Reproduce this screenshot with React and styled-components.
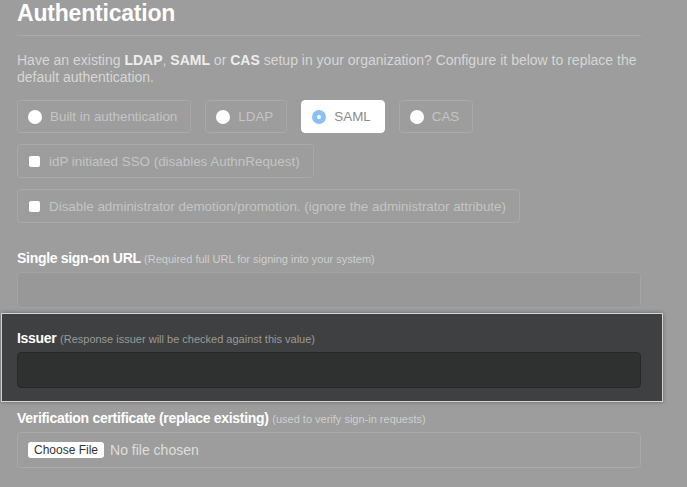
import React from "react";
import styled, { createGlobalStyle } from "styled-components";

const GlobalStyle = createGlobalStyle`
  body {
    margin: 0;
    background: #9c9d9c;
    font-family: "Liberation Sans", Arial, Helvetica, sans-serif;
  }
`;

const Page = styled.div`
  width: 624px;
  padding-left: 17px;
  padding-bottom: 20px;
`;

const Title = styled.h1`
  margin: 0;
  padding-bottom: 9px;
  font-size: 23px;
  line-height: 26px;
  font-weight: bold;
  color: #ffffff;
  letter-spacing: -0.2px;
  border-bottom: 1px solid #a9aaa9;
`;

const Intro = styled.p`
  margin: 16px 0 0;
  font-size: 14px;
  line-height: 17px;
  color: #d6d7d6;

  strong {
    color: #eeeeee;
  }
`;

const OptionRow = styled.div`
  display: flex;
  gap: 14px;
  margin-top: ${(p) => p.$top}px;
`;

const Option = styled.label`
  display: flex;
  align-items: center;
  height: ${(p) => p.$h}px;
  box-sizing: border-box;
  padding: 0 13px 0 ${(p) => p.$pl}px;
  gap: ${(p) => p.$gap}px;
  border: 1px solid ${(p) => (p.$active ? "#ffffff" : "#a8a9a8")};
  border-radius: 4px;
  background: ${(p) => (p.$active ? "#ffffff" : "transparent")};
  color: ${(p) => (p.$active ? "#8c8c8c" : "#c4c5c4")};
  font-size: 13.4px;
`;

const Radio = styled.span`
  width: 14px;
  height: 14px;
  border-radius: 50%;
  background: ${(p) => (p.$on ? "#8bbff6" : "#ffffff")};
  display: flex;
  align-items: center;
  justify-content: center;

  &::after {
    content: "";
    display: ${(p) => (p.$on ? "block" : "none")};
    width: 4px;
    height: 4px;
    border-radius: 50%;
    background: #ffffff;
  }
`;

const Check = styled.span`
  width: 11px;
  height: 11px;
  border-radius: 2px;
  background: #ffffff;
`;

const Label = styled.div`
  height: 17px;
  margin-top: ${(p) => p.$top}px;
  margin-bottom: 5px;
  font-size: 14px;
  line-height: 17px;
  font-weight: bold;
  color: #ffffff;
  letter-spacing: -0.3px;
  white-space: nowrap;
`;

const Hint = styled.span`
  font-size: 11px;
  line-height: 1;
  font-weight: normal;
  letter-spacing: 0;
  color: ${(p) => (p.$dark ? "#9a9a9a" : "#cfd0cf")};
`;

const Input = styled.div`
  height: 36px;
  box-sizing: border-box;
  border-radius: 4px;
  border: 1px solid ${(p) => (p.$dark ? "#272828" : "#a2a3a2")};
  background: ${(p) => (p.$dark ? "#2f3030" : "#979897")};
`;

const Spotlight = styled.section`
  margin: 5px -22px 0 -16px;
  padding: 16px 21px 13px 15px;
  background: #3f4041;
  border: 1px solid #d4d4d4;
  box-shadow: 0 0 4px rgba(0, 0, 0, 0.35);
`;

const FileBox = styled.div`
  height: 36px;
  box-sizing: border-box;
  border: 1px solid #a8a9a8;
  border-radius: 4px;
  display: flex;
  align-items: center;
  padding-left: 10px;
  gap: 6px;
`;

const FileButton = styled.span`
  height: 16px;
  padding: 0 6px;
  background: #ffffff;
  border-radius: 3px;
  font-size: 12px;
  line-height: 16px;
  color: #333333;
`;

const FileName = styled.span`
  font-size: 14px;
  color: #dedfde;
`;

const methods = [
  { name: "Built in authentication" },
  { name: "LDAP" },
  { name: "SAML", active: true },
  { name: "CAS" },
];

export default function App() {
  return (
    <>
      <GlobalStyle />
      <Page>
        <Title>Authentication</Title>
        <Intro>
          Have an existing <strong>LDAP</strong>, <strong>SAML</strong> or{" "}
          <strong>CAS</strong> setup in your organization? Configure it below to
          replace the default authentication.
        </Intro>

        <OptionRow $top={14}>
          {methods.map((m) => (
            <Option key={m.name} $h={33} $pl={10} $gap={8} $active={m.active}>
              <Radio $on={m.active} />
              {m.name}
            </Option>
          ))}
        </OptionRow>
        <OptionRow $top={11}>
          <Option $h={34} $pl={11} $gap={9}>
            <Check />
            idP initiated SSO (disables AuthnRequest)
          </Option>
        </OptionRow>
        <OptionRow $top={11}>
          <Option $h={34} $pl={11} $gap={9}>
            <Check />
            Disable administrator demotion/promotion. (ignore the administrator
            attribute)
          </Option>
        </OptionRow>

        <Label $top={27}>
          Single sign-on URL{" "}
          <Hint>(Required full URL for signing into your system)</Hint>
        </Label>
        <Input />

        <Spotlight>
          <Label $top={0}>
            Issuer <Hint $dark>(Response issuer will be checked against this value)</Hint>
          </Label>
          <Input $dark />
        </Spotlight>

        <Label $top={8}>
          Verification certificate (replace existing){" "}
          <Hint>(used to verify sign-in requests)</Hint>
        </Label>
        <FileBox>
          <FileButton>Choose File</FileButton>
          <FileName>No file chosen</FileName>
        </FileBox>
      </Page>
    </>
  );
}
